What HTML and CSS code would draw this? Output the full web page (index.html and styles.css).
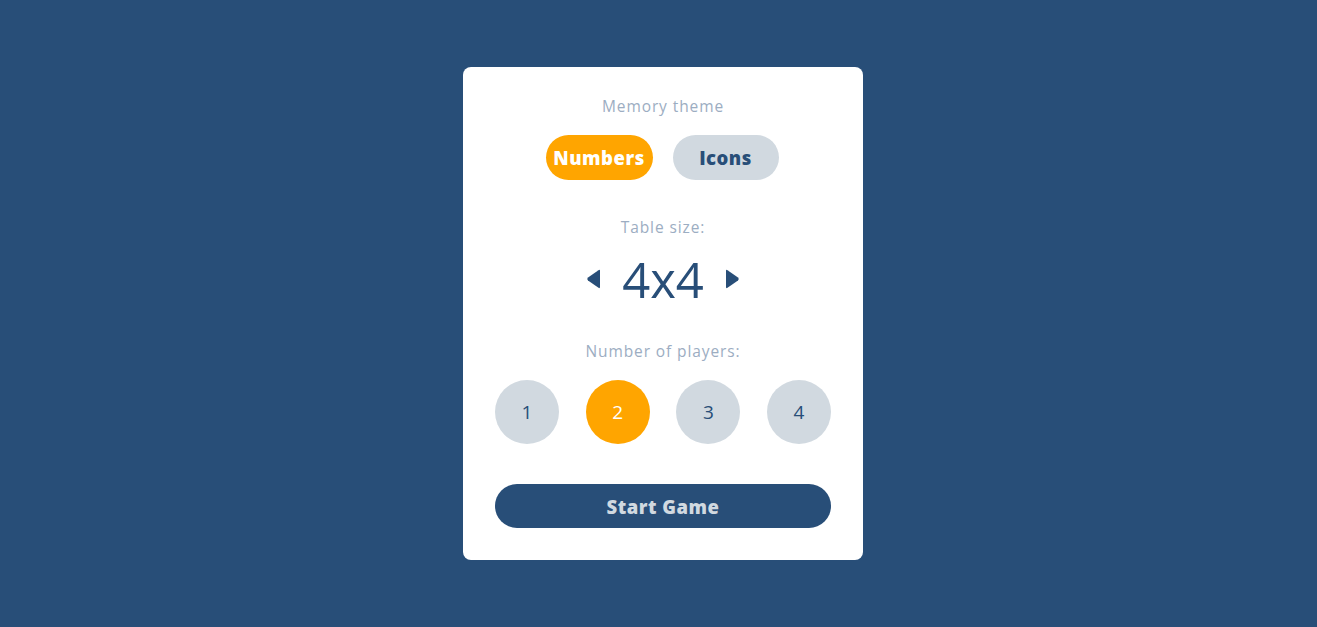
FILE: index.html
```html
<!DOCTYPE html>
<html lang="en">
<head>
<meta charset="utf-8">
<title>Memory game settings</title>
<link rel="stylesheet" href="styles.css">
</head>
<body>
<main class="page">
  <section class="card">
    <p class="label label-theme">Memory theme</p>
    <div class="theme-row">
      <button class="pill pill-active">Numbers</button>
      <button class="pill">Icons</button>
    </div>
    <p class="label label-size">Table size:</p>
    <div class="size-row">
      <button class="arrow" aria-label="previous size">
        <svg width="14" height="22" viewBox="0 0 14 22"><path d="M12.5 2.2 L2 9.6 Q0.4 11 2 12.4 L12.5 19.8 Q14 20.8 14 19 L14 3 Q14 1.2 12.5 2.2 Z" fill="#284e78"/></svg>
      </button>
      <span class="size-value">4x4</span>
      <button class="arrow" aria-label="next size">
        <svg width="14" height="22" viewBox="0 0 14 22"><path d="M1.5 2.2 L12 9.6 Q13.6 11 12 12.4 L1.5 19.8 Q0 20.8 0 19 L0 3 Q0 1.2 1.5 2.2 Z" fill="#284e78"/></svg>
      </button>
    </div>
    <p class="label label-players">Number of players:</p>
    <div class="players-row">
      <button class="circle">1</button>
      <button class="circle circle-active">2</button>
      <button class="circle">3</button>
      <button class="circle">4</button>
    </div>
    <button class="start">Start Game</button>
  </section>
</main>
</body>
</html>
```
FILE: styles.css
```css
* { box-sizing: border-box; }
html, body { margin: 0; padding: 0; }
body {
  background: #284e78;
  font-family: "Open Sans", "DejaVu Sans", sans-serif;
  height: 627px;
}
.page {
  display: flex;
  justify-content: center;
  padding-top: 67px;
  padding-left: 9px;
}
.card {
  width: 400px;
  height: 493px;
  background: #ffffff;
  border-radius: 8px;
  padding: 29px 32px 32px;
  display: flex;
  flex-direction: column;
  align-items: center;
}
.label {
  margin: 0;
  font-size: 15.5px;
  line-height: 20px;
  letter-spacing: 0.9px;
  color: #9cadc2;
  text-align: center;
}
.theme-row {
  display: flex;
  gap: 20px;
  margin-top: 19px;
  margin-right: 2px;
}
.pill {
  height: 45px;
  border: none;
  border-radius: 23px;
  font-family: inherit;
  font-weight: 800;
  font-size: 18.5px;
  letter-spacing: 0.5px;
  color: #284e78;
  background: #d1d9e0;
  padding: 0;
  width: 106px;
}
.pill-active {
  background: #ffa500;
  color: #ffffff;
  width: 107px;
}
.label-size { margin-top: 37px; }
.size-row {
  display: flex;
  align-items: center;
  gap: 22px;
  height: 62px;
  margin-top: 11px;
}
.arrow {
  background: none;
  border: none;
  padding: 0;
  width: 14px;
  height: 22px;
  display: flex;
}
.size-value {
  font-size: 49px;
  line-height: 62px;
  color: #284e78;
}
.label-players { margin-top: 31px; }
.players-row {
  display: flex;
  justify-content: space-between;
  width: 336px;
  margin-top: 19px;
}
.circle {
  width: 64px;
  height: 64px;
  border-radius: 50%;
  border: none;
  background: #d1d9e0;
  color: #284e78;
  font-family: inherit;
  font-size: 19px;
  padding: 0;
}
.circle-active {
  background: #ffa500;
  color: #ffffff;
}
.start {
  margin-top: 40px;
  width: 336px;
  height: 44px;
  border: none;
  border-radius: 22px;
  background: #284e78;
  color: #d1d9e0;
  font-family: inherit;
  font-weight: 800;
  font-size: 18.5px;
  letter-spacing: 0.5px;
}
```
